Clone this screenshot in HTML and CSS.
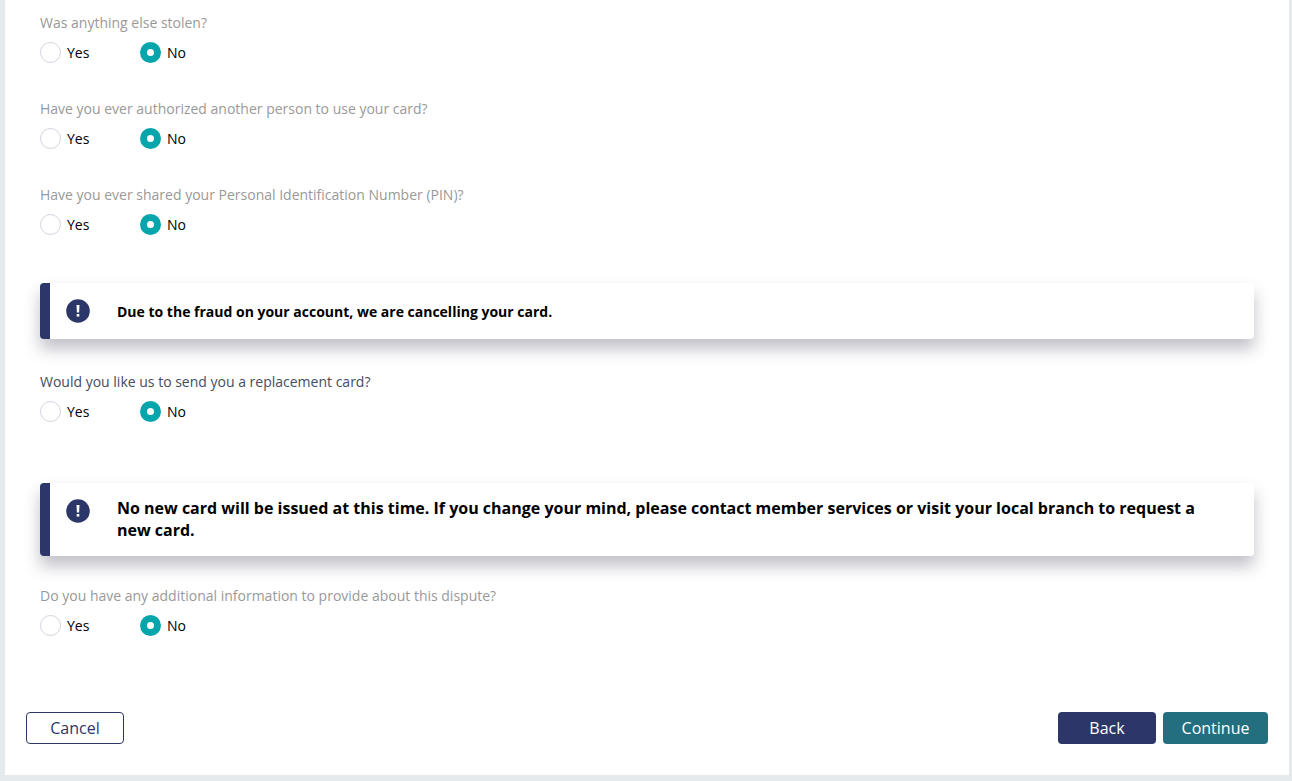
FILE: index.html
```html
<!DOCTYPE html>
<html lang="en">
<head>
<meta charset="utf-8">
<title>Card dispute</title>
<link rel="stylesheet" href="styles.css">
</head>
<body>
<form class="panel">
  <div class="questions">
    <fieldset class="question">
      <legend class="prompt">Was anything else stolen?</legend>
      <div class="options">
        <label class="option"><input class="radio" type="radio" name="stolen">Yes</label>
        <label class="option"><input class="radio" type="radio" name="stolen" checked>No</label>
      </div>
    </fieldset>
    <fieldset class="question">
      <legend class="prompt">Have you ever authorized another person to use your card?</legend>
      <div class="options">
        <label class="option"><input class="radio" type="radio" name="authorized">Yes</label>
        <label class="option"><input class="radio" type="radio" name="authorized" checked>No</label>
      </div>
    </fieldset>
    <fieldset class="question">
      <legend class="prompt">Have you ever shared your Personal Identification Number (PIN)?</legend>
      <div class="options">
        <label class="option"><input class="radio" type="radio" name="pin">Yes</label>
        <label class="option"><input class="radio" type="radio" name="pin" checked>No</label>
      </div>
    </fieldset>
  </div>

  <div class="alert">
    <svg class="alert-icon" viewBox="0 0 24 24" aria-hidden="true"><circle cx="12" cy="12" r="11.8" fill="#2d3668"/><path d="M10.5 6h3l-.4 7.4h-2.2z" fill="#fff"/><path d="M10.7 15h2.6v2.6h-2.6z" fill="#fff"/></svg>
    <p class="alert-text">Due to the fraud on your account, we are cancelling your card.</p>
  </div>

  <fieldset class="question">
    <legend class="prompt prompt-active">Would you like us to send you a replacement card?</legend>
    <div class="options">
      <label class="option"><input class="radio" type="radio" name="replacement">Yes</label>
      <label class="option"><input class="radio" type="radio" name="replacement" checked>No</label>
    </div>
  </fieldset>

  <div class="alert alert-large">
    <svg class="alert-icon" viewBox="0 0 24 24" aria-hidden="true"><circle cx="12" cy="12" r="11.8" fill="#2d3668"/><path d="M10.5 6h3l-.4 7.4h-2.2z" fill="#fff"/><path d="M10.7 15h2.6v2.6h-2.6z" fill="#fff"/></svg>
    <p class="alert-text">No new card will be issued at this time. If you change your mind, please contact member services or visit your local branch to request a new card.</p>
  </div>

  <fieldset class="question">
    <legend class="prompt">Do you have any additional information to provide about this dispute?</legend>
    <div class="options">
      <label class="option"><input class="radio" type="radio" name="additional">Yes</label>
      <label class="option"><input class="radio" type="radio" name="additional" checked>No</label>
    </div>
  </fieldset>

  <div class="actions">
    <button class="button button-cancel" type="button">Cancel</button>
    <button class="button button-back" type="button">Back</button>
    <button class="button button-continue" type="submit">Continue</button>
  </div>
</form>
</body>
</html>
```

FILE: styles.css
```css
* {
  box-sizing: border-box;
}

body {
  margin: 0;
  padding: 0 3px 6px 5px;
  background: #e5eaed;
  font-family: "Open Sans", "Noto Sans", sans-serif;
  font-size: 14px;
  line-height: 20px;
  color: #000;
}

.panel {
  padding: 13px 35px 31px;
  background: #fff;
}

.questions {
  display: flex;
  flex-direction: column;
  gap: 36px;
}

.question {
  min-width: 0;
  margin: 0;
  padding: 0;
  border: 0;
}

.prompt {
  padding: 0;
  color: #999;
}

.prompt-active {
  color: #444c63;
}

.options {
  display: flex;
  padding-top: 9px;
}

.option {
  display: flex;
  align-items: center;
  gap: 6px;
  width: 100px;
  height: 21px;
}

.radio {
  appearance: none;
  width: 21px;
  height: 21px;
  margin: 0;
  border: 1px solid #d0d4dc;
  border-radius: 50%;
  background: #fff;
}

.radio:checked {
  border: 7px solid #05a5ac;
}

.alert {
  display: flex;
  align-items: flex-start;
  gap: 27px;
  margin: 48px 0 33px;
  padding: 14px 48px 15px 16px;
  border-left: 10px solid #2d3668;
  border-radius: 4px;
  background: #fff;
  box-shadow: 0 10px 16px rgba(45, 48, 72, 0.3);
}

.alert-large {
  margin: 61px 0 30px;
  font-size: 16px;
  line-height: 22px;
}

.alert-icon {
  flex: none;
  width: 24px;
  height: 24px;
  margin-top: 2px;
}

.alert-text {
  margin: 0;
  padding: 5px 0 2px;
  font-weight: 700;
}

.alert-large .alert-text {
  padding: 0;
}

.actions {
  display: flex;
  gap: 7px;
  margin: 76px -14px 0;
}

.button {
  min-width: 98px;
  height: 32px;
  padding: 0 18px;
  border: 0;
  border-radius: 4px;
  font: inherit;
  font-size: 16px;
  color: #fff;
}

.button-cancel {
  margin-right: auto;
  border: 1px solid #2d3668;
  background: #fff;
  color: #2d3668;
}

.button-back {
  background: #2d3668;
}

.button-continue {
  min-width: 105px;
  background: #236f7f;
}
```
